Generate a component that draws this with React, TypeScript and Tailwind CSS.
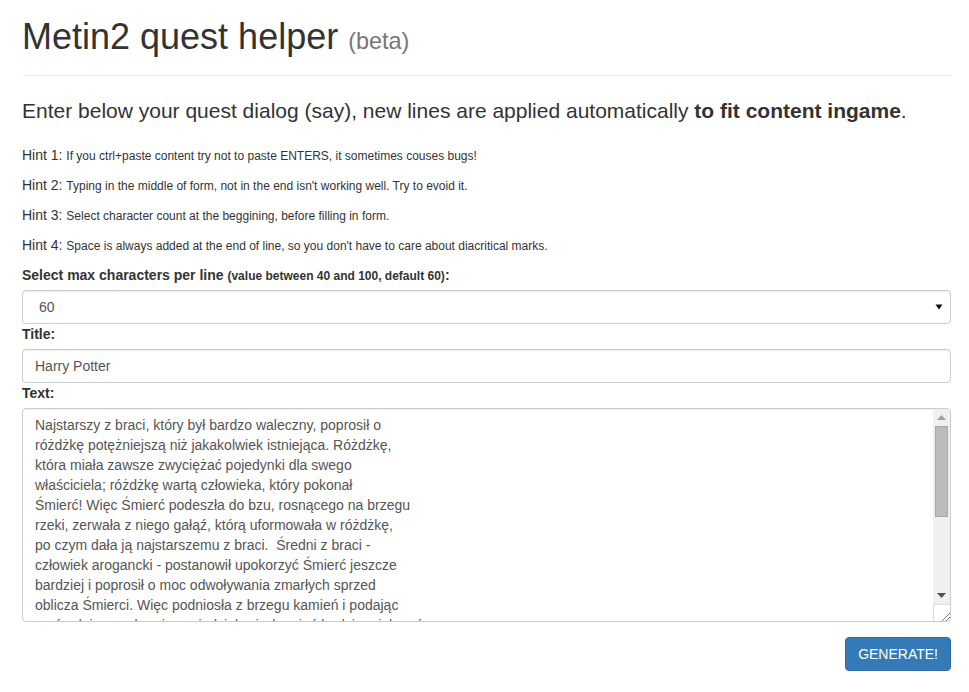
import { useState } from "react";

const hints = [
  ["Hint 1:", "If you ctrl+paste content try not to paste ENTERS, it sometimes couses bugs!"],
  ["Hint 2:", "Typing in the middle of form, not in the end isn't working well. Try to evoid it."],
  ["Hint 3:", "Select character count at the beggining, before filling in form."],
  ["Hint 4:", "Space is always added at the end of line, so you don't have to care about diacritical marks."],
];

const textLines = [
  "Najstarszy z braci, który był bardzo waleczny, poprosił o",
  "różdżkę potężniejszą niż jakakolwiek istniejąca. Różdżkę,",
  "która miała zawsze zwyciężać pojedynki dla swego",
  "właściciela; różdżkę wartą człowieka, który pokonał",
  "Śmierć! Więc Śmierć podeszła do bzu, rosnącego na brzegu",
  "rzeki, zerwała z niego gałąź, którą uformowała w różdżkę,",
  "po czym dała ją najstarszemu z braci.  Średni z braci -",
  "człowiek arogancki - postanowił upokorzyć Śmierć jeszcze",
  "bardziej i poprosił o moc odwoływania zmarłych sprzed",
  "oblicza Śmierci. Więc podniosła z brzegu kamień i podając",
  "go średniemu z braci, powiedziała, że kamień będzie miał moć",
];

export default function App() {
  const [chars, setChars] = useState("60");
  const [title, setTitle] = useState("Harry Potter");

  return (
    <div className="min-h-screen bg-white pl-[22px] pr-[18px] pt-[17px] font-['Liberation_Sans',Arial,sans-serif] text-[14px] leading-5 text-[#333]">
      {/* Header */}
      <div className="border-b border-[#eee] pb-[9px]">
        <h1 className="mb-[9px] text-[36px] font-normal leading-[39.6px] text-[#333]">
          Metin2 quest helper <small className="text-[23.4px] leading-none text-[#777]">(beta)</small>
        </h1>
      </div>

      <p className="mt-5 mb-5 text-[21px] leading-[29.4px] font-light">
        Enter below your quest dialog (say), new lines are applied automatically <b className="font-bold">to fit content ingame</b>.
      </p>

      {hints.map(([k, v]) => (
        <p key={k} className="mb-[10px] h-5">
          {k} <small className="text-[12px] leading-none">{v}</small>
        </p>
      ))}

      {/* Form */}
      <label className="mb-[5px] block h-5 font-bold">
        Select max characters per line <small className="text-[12px] leading-none">(value between 40 and 100, default 60)</small>:
      </label>
      <div className="relative">
        <select
          value={chars}
          onChange={(e) => setChars(e.target.value)}
          className="block h-[34px] w-full appearance-none rounded-[4px] border border-[#ccc] bg-white pl-4 pr-8 text-[14px] text-[#555] shadow-[inset_0_1px_1px_rgba(0,0,0,0.075)] outline-none"
        >
          {Array.from({ length: 61 }, (_, i) => 40 + i).map((n) => (
            <option key={n} value={String(n)}>{n}</option>
          ))}
        </select>
        <svg className="pointer-events-none absolute top-[14px] right-[8px]" width="8" height="6" viewBox="0 0 8 6">
          <path d="M0.5 0.5h7L4 5.5z" fill="#111" />
        </svg>
      </div>

      <label className="mb-[5px] block font-bold">Title:</label>
      <input
        value={title}
        onChange={(e) => setTitle(e.target.value)}
        className="block h-[34px] w-full rounded-[4px] border border-[#ccc] px-3 text-[14px] text-[#555] shadow-[inset_0_1px_1px_rgba(0,0,0,0.075)] outline-none"
      />

      <label className="mb-[5px] block font-bold">Text:</label>
      <div className="flex h-[214px] overflow-hidden rounded-[4px] border border-[#ccc] bg-white shadow-[inset_0_1px_1px_rgba(0,0,0,0.075)]">
        <div className="flex-1 overflow-hidden px-3 pt-[6px] whitespace-pre text-[#555]">
          {textLines.map((l, i) => (
            <div key={i}>{l}</div>
          ))}
        </div>
        {/* scrollbar */}
        <div className="flex w-[17px] flex-col">
          <div className="flex flex-1 flex-col bg-[#f0f0f0]">
            <div className="flex h-[17px] items-center justify-center">
              <svg width="9" height="5" viewBox="0 0 9 5"><path d="M4.5 0L9 5H0z" fill="#a3a3a3" /></svg>
            </div>
            <div className="flex-1 px-[2px]">
              <div className="h-[91px] border border-[#a8a8a8] bg-[#bcbcbc]" />
            </div>
            <div className="flex h-[17px] items-center justify-center">
              <svg width="9" height="5" viewBox="0 0 9 5"><path d="M0 0h9L4.5 5z" fill="#505050" /></svg>
            </div>
          </div>
          <div className="relative h-[17px] border-t border-l border-[#dcdcdc] bg-white">
            <svg className="absolute right-0 bottom-0" width="10" height="10" viewBox="0 0 10 10">
              <path d="M2 10L10 2M6 10L10 6" stroke="#777" strokeWidth="1" />
            </svg>
          </div>
        </div>
      </div>

      <div className="mt-[15px] flex justify-end">
        <button className="h-[34px] rounded-[4px] border border-[#2e6da4] bg-[#337ab7] px-3 text-[14px] text-white">
          GENERATE!
        </button>
      </div>
    </div>
  );
}
